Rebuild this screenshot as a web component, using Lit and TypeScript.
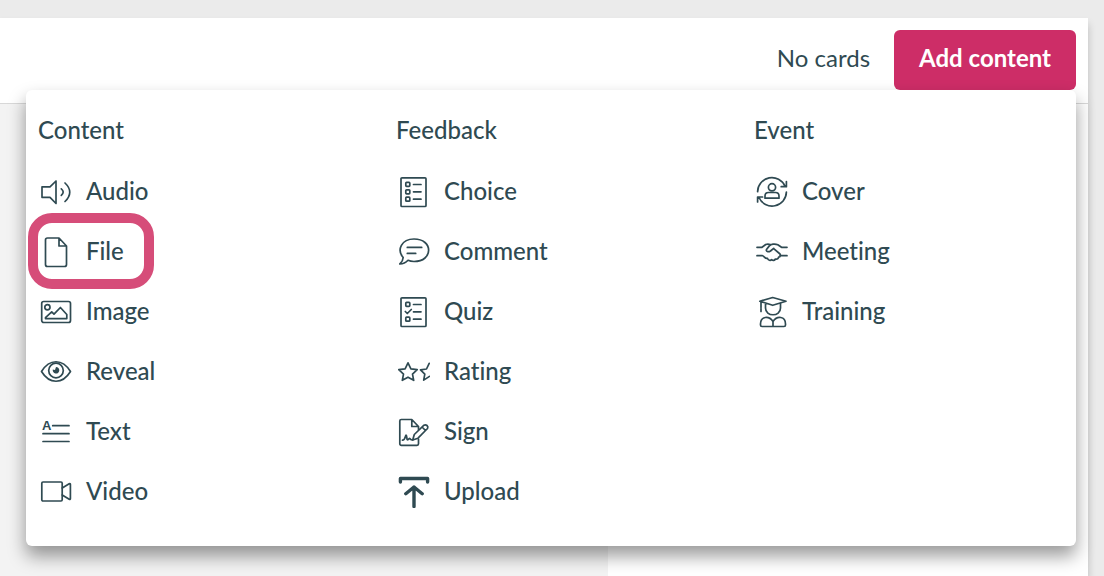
import { LitElement, html, css, svg, nothing } from "lit";
import type { SVGTemplateResult } from "lit";
import { customElement, property } from "lit/decorators.js";

const star = "M10 6.8l2.9 6 6.3.9-4.7 4.4 1.2 6.2L10 21.2l-5.7 3.1 1.2-6.2L.8 13.7l6.3-.9z";

const icons: Record<string, SVGTemplateResult> = {
  audio: svg`<path d="M2 10.8h8L16 5v22.5l-6-6.2H2z"/><path d="M21.3 12.8q3.8 3.3 0 6.6M25 7q9.5 9 0 18.5"/>`,
  file: svg`<path d="M7.5 2H19l7.5 8v18.5a2 2 0 0 1-2 2h-17a2 2 0 0 1-2-2V4a2 2 0 0 1 2-2zM19 2v8h7.5"/>`,
  image: svg`<rect x="1.7" y="5.5" width="28.8" height="21" rx="2"/><circle cx="7.4" cy="11.2" r="2.6"/><path d="M5.5 22.6v-1l6.2-5.8 2.3 2.4 6.4-6.7 6.4 7v4.1z"/>`,
  reveal: svg`<path d="M1.5 15.5C9.5 2.5 22.5 2.5 30.5 15.5 22.5 28.5 9.5 28.5 1.5 15.5z"/><circle cx="16" cy="14.5" r="7.3"/><path class="solid" d="M16 11a3.3 3.3 0 1 1-3.2 2.5l2.2.5z"/>`,
  text: svg`<text class="letter" x="2" y="14">A</text><path d="M12.7 9.7H29M3 17.7h26M3 25.5h26"/>`,
  video: svg`<rect x="1.8" y="6" width="20.4" height="19" rx="1.2"/><path d="M22.2 12l7-4.3q1.2-.5 1.2.8v14q0 1.3-1.2.8l-7-4.3"/>`,
  choice: svg`<rect x="3" y="1.8" width="25" height="28.7" rx="1"/><rect x="7.8" y="6.4" width="4" height="4" rx=".8"/><rect x="7.8" y="13.8" width="4" height="4" rx=".8"/><rect x="7.8" y="21.2" width="4" height="4" rx=".8"/><path d="M15.5 8.5H23M15.5 15.8H23M15.5 23.2H23"/>`,
  comment: svg`<path d="M5.2 21.5C-1.5 14 3.5 3 16 3c19.5 0 19.5 22.5 0 22.5-2.8 0-4.5-.5-6-1.2-2 2.2-4.5 3.7-8.2 3.7 2-1.8 3.2-3.5 3.4-6.5zM9.3 11.4h14.4M9.3 17.4h8.4"/>`,
  quiz: svg`<rect x="3" y="1.8" width="25" height="28.7" rx="1"/><rect x="7.8" y="6.4" width="4" height="4" rx=".8"/><path d="M7.3 15.5l2 2 4-4"/><rect x="7.8" y="21.2" width="4" height="4" rx=".8"/><path d="M15.5 8.5H23M15.5 15.8H23M15.5 23.2H23"/>`,
  rating: svg`<path d=${star}/><path d="M31.2 7.3L28.5 13l-6 .9 4.3 4.3-1.1 5.9 5.8-3.7"/>`,
  sign: svg`<path d="M20.5 23v4.8a1.5 1.5 0 0 1-1.5 1.5H3.3a1.5 1.5 0 0 1-1.5-1.5V5a1.5 1.5 0 0 1 1.5-1.5h10.5l6.7 7v3M13.8 3.5v7h6.7"/><path d="M4.5 24.2c3 0 2.6-5 3.6-5s.4 5 1.6 4.6 1.6-2 2.2-1.2.9 1.4 2.8 1.4"/><path d="M14.7 24l1.6-5.5L26 9.2q1.5-1 3 .3t.5 3L20 22.2zM24 11l3.5 3.5"/>`,
  upload: svg`<path class="bold" d="M2.4 6V2.5h27.2V6M16 30.5V11M7.8 17.7L16 11l8.2 6.7"/>`,
  cover: svg`<path d="M1.6 15.7A14.3 14.3 0 0 1 29 10.2M30.4 16A14.3 14.3 0 0 1 3 21.5M30.4 5.5v5.2h-5.2M1.6 26v-5h5"/><circle cx="16" cy="11.3" r="3.6"/><path d="M9 22.2v-2.2q0-3.5 3.5-3.5h7q3.5 0 3.5 3.5v2.2z"/>`,
  meeting: svg`<path d="M1 11.3h5l3.7-2.8c2.5-1 3.8-.2 5.3.2M1 19.7h5.5c2 .5 2.3 3.3 5 2.7.5 2 3 2.5 4.2 1.2 1.3 1.3 3 .8 3.7-.6 2 .4 3-.5 3.2-1.8 1.9-.3 2.4-1.9 1.4-3.2l-6-5.2M31 11.3h-5.5l-3.7-2.6c-3-1.2-7-.7-8.5 1.2l-2.8 3.6c-.8 1.9 1.7 3 4 1.5l3.2-2.7M24 19.7h7"/>`,
  training: svg`<path d="M16.7 1.5L30 5.2 16.7 9.3 3.8 5.2zM9.5 7v5c0 9 15 9 15 0V7M5 6v5.5M5 12.5v3"/><path d="M4.5 29v-1c0-8 8.5-8.5 12.5-2.5 4-6 12.5-5.5 12.5 2.5v1q0 1.5-1.5 1.5H6q-1.5 0-1.5-1.5zM17 25.5v5"/>`,
};

interface Entry { icon: string; label: string; marked?: boolean; }

const groups: { title: string; entries: Entry[] }[] = [
  { title: "Content", entries: [
    { icon: "audio", label: "Audio" },
    { icon: "file", label: "File", marked: true },
    { icon: "image", label: "Image" },
    { icon: "reveal", label: "Reveal" },
    { icon: "text", label: "Text" },
    { icon: "video", label: "Video" },
  ] },
  { title: "Feedback", entries: [
    { icon: "choice", label: "Choice" },
    { icon: "comment", label: "Comment" },
    { icon: "quiz", label: "Quiz" },
    { icon: "rating", label: "Rating" },
    { icon: "sign", label: "Sign" },
    { icon: "upload", label: "Upload" },
  ] },
  { title: "Event", entries: [
    { icon: "cover", label: "Cover" },
    { icon: "meeting", label: "Meeting" },
    { icon: "training", label: "Training" },
  ] },
];

@customElement("content-entry")
class ContentEntry extends LitElement {
  @property({ attribute: false }) entry!: Entry;

  static styles = css`
    :host { display: block; }
    .entry {
      position: relative;
      display: flex;
      align-items: center;
      gap: 14px;
      height: 60px;
      padding: 0 2px;
      border: 0;
      background: none;
      color: inherit;
      font: inherit;
      font-variant-ligatures: none;
      cursor: pointer;
    }
    .icon {
      width: 32px;
      height: 32px;
      fill: none;
      stroke: currentColor;
      stroke-width: 1.7;
      stroke-linecap: round;
      stroke-linejoin: round;
    }
    .solid { fill: currentColor; stroke: none; }
    .bold { stroke-width: 3.4; }
    .letter { fill: currentColor; stroke: none; font: 700 13px "Liberation Sans", sans-serif; }
    .label { padding-bottom: 3px; }
    .ring {
      position: absolute;
      inset: -9px -28px -7px -10px;
      border: 10px solid #d64d79;
      border-radius: 24px;
      pointer-events: none;
    }
  `;

  render() {
    const { icon, label, marked } = this.entry;
    return html`<button class="entry" type="button">
      <svg class="icon" viewBox="0 0 32 32" aria-hidden="true">${icons[icon]}</svg>
      <span class="label">${label}</span>
      ${marked ? html`<span class="ring"></span>` : nothing}
    </button>`;
  }
}

@customElement("app-root")
class AppRoot extends LitElement {
  static styles = css`
    :host {
      display: flex;
      box-sizing: border-box;
      min-height: 100vh;
      padding: 18px 16px 0 0;
      overflow: hidden;
      background: #ebebeb;
      color: #2f4a52;
      font: 500 24px/30px Lato, sans-serif;
    }
    .sheet {
      flex: 1;
      display: flex;
      flex-direction: column;
      background: #fff;
      box-shadow: 0 6px 8px rgba(0, 0, 0, 0.2);
    }
    .bar {
      position: relative;
      display: flex;
      justify-content: flex-end;
      align-items: flex-start;
      gap: 24px;
      padding: 12px 12px 13px;
      border-bottom: 1px solid #d8d8d8;
    }
    .count { padding: 13px 0; font-weight: 400; }
    .add {
      height: 60px;
      padding: 0 25px 4px;
      border: 0;
      border-radius: 6px;
      background: #cd2d67;
      color: #fff;
      font: inherit;
      font-weight: 700;
      cursor: pointer;
    }
    .body { flex: 1; display: grid; grid-template-columns: 19fr 15fr; }
    .side { background: #f3f3f3; }
    .menu {
      position: absolute;
      top: 72px;
      left: 26px;
      right: 12px;
      display: grid;
      grid-template-columns: repeat(3, 1fr);
      gap: 48px;
      padding: 12px 12px 24px;
      border-radius: 6px;
      background: #fff;
      box-shadow: 0 10px 18px rgba(0, 0, 0, 0.4);
    }
    .title { margin: 0; padding: 13px 0 17px; font: inherit; }
    .list { margin: 0; padding: 0; list-style: none; }
  `;

  render() {
    return html`<main class="sheet">
      <header class="bar">
        <span class="count">No cards</span>
        <button class="add" type="button">Add content</button>
        <nav class="menu">
          ${groups.map((group) => html`<section>
            <h2 class="title">${group.title}</h2>
            <ul class="list">
              ${group.entries.map((entry) => html`<li><content-entry .entry=${entry}></content-entry></li>`)}
            </ul>
          </section>`)}
        </nav>
      </header>
      <div class="body"><div class="side"></div></div>
    </main>`;
  }
}
